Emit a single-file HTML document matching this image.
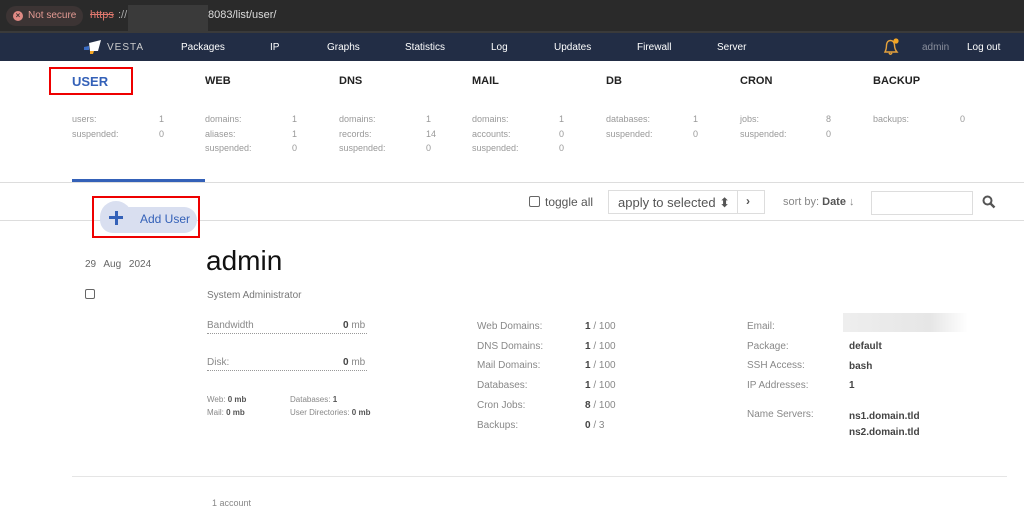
<!DOCTYPE html>
<html><head><meta charset="utf-8"><style>
*{margin:0;padding:0;box-sizing:border-box}
body{width:1024px;height:521px;overflow:hidden;background:#fff;font-family:"Liberation Sans",Arial,sans-serif;position:relative}
.a{position:absolute;white-space:nowrap}
.nav{font-size:10px;color:#fff;top:42px}
.h{font-size:11px;font-weight:bold;color:#222;top:75px}
.s{font-size:9px;color:#999}
.g{font-size:10px;color:#888}
.b{font-size:10px;color:#444;font-weight:bold}
</style></head><body>
<div class="a" style="left:0;top:0;width:1024px;height:31px;background:#2a2a2a"></div>
<div class="a" style="left:0;top:31px;width:1024px;height:2px;background:#3a3a3a"></div>
<div class="a" style="left:6px;top:6px;width:77px;height:20px;border-radius:10px;background:#3c3434"></div>
<div class="a" style="left:13px;top:11px;width:10px;height:10px;border-radius:50%;background:#e08a84;color:#3c3434;font-size:8px;line-height:10px;text-align:center;font-weight:bold">×</div>
<div class="a" style="left:28px;top:10px;font-size:10px;color:#e39a93">Not secure</div>
<div class="a" style="left:90px;top:9px;font-size:11px;color:#e0786e;text-decoration:line-through">https</div>
<div class="a" style="left:118px;top:9px;font-size:11px;color:#aaa">://</div>
<div class="a" style="left:128px;top:5px;width:80px;height:26px;background:#3a3a3a"></div>
<div class="a" style="left:208px;top:9px;font-size:11px;color:#ddd">8083/list/user/</div>
<div class="a" style="left:0;top:33px;width:1024px;height:28px;background:#222d45"></div>
<div class="a" style="left:84px;top:40px;width:18px;height:14px">
<svg width="18" height="14"><path d="M5 3 L17 0 L14 11 L6 11Z" fill="#fff"/><path d="M6 11 L10 11 L9 14 L6 14Z" fill="#f5a623"/><path d="M0 7 L5 6 L5 10 L0 10Z" fill="#3a6cc4"/></svg></div>
<div class="a nav" style="left:107px;letter-spacing:1px;color:#ccc">VESTA</div>
<div class="a nav" style="left:181px">Packages</div>
<div class="a nav" style="left:270px">IP</div>
<div class="a nav" style="left:327px">Graphs</div>
<div class="a nav" style="left:405px">Statistics</div>
<div class="a nav" style="left:491px">Log</div>
<div class="a nav" style="left:554px">Updates</div>
<div class="a nav" style="left:637px">Firewall</div>
<div class="a nav" style="left:717px">Server</div>
<svg class="a" style="left:881px;top:37px" width="20" height="20"><path d="M4 15 Q5.5 12 5.5 8 Q6 3.5 9.5 3.5 Q13 3.5 13.5 8 Q13.5 12 16 15Z M8 16 Q9.5 18.5 11 16" fill="none" stroke="#e6a23c" stroke-width="1.4"/><circle cx="15" cy="4" r="2.6" fill="#f5a623"/></svg>
<div class="a nav" style="left:922px;color:#8a8f9c">admin</div>
<div class="a nav" style="left:967px">Log out</div>
<div class="a" style="left:49px;top:67px;width:84px;height:28px;border:2px solid #e00"></div>
<div class="a" style="left:72px;top:74px;font-size:13px;font-weight:bold;color:#3461b8">USER</div>
<div class="a h" style="left:205px">WEB</div>
<div class="a h" style="left:339px">DNS</div>
<div class="a h" style="left:472px">MAIL</div>
<div class="a h" style="left:606px">DB</div>
<div class="a h" style="left:740px">CRON</div>
<div class="a h" style="left:873px">BACKUP</div>
<div class="a s" style="left:72px;top:112px;line-height:14.5px">users:<br>suspended:</div>
<div class="a s" style="left:159px;top:112px;line-height:14.5px">1<br>0</div>
<div class="a s" style="left:205px;top:112px;line-height:14.5px">domains:<br>aliases:<br>suspended:</div>
<div class="a s" style="left:292px;top:112px;line-height:14.5px">1<br>1<br>0</div>
<div class="a s" style="left:339px;top:112px;line-height:14.5px">domains:<br>records:<br>suspended:</div>
<div class="a s" style="left:426px;top:112px;line-height:14.5px">1<br>14<br>0</div>
<div class="a s" style="left:472px;top:112px;line-height:14.5px">domains:<br>accounts:<br>suspended:</div>
<div class="a s" style="left:559px;top:112px;line-height:14.5px">1<br>0<br>0</div>
<div class="a s" style="left:606px;top:112px;line-height:14.5px">databases:<br>suspended:</div>
<div class="a s" style="left:693px;top:112px;line-height:14.5px">1<br>0</div>
<div class="a s" style="left:740px;top:112px;line-height:14.5px">jobs:<br>suspended:</div>
<div class="a s" style="left:826px;top:112px;line-height:14.5px">8<br>0</div>
<div class="a s" style="left:873px;top:112px;line-height:14.5px">backups:</div>
<div class="a s" style="left:960px;top:112px;line-height:14.5px">0</div>
<div class="a" style="left:0;top:182px;width:1024px;height:1px;background:#ddd"></div>
<div class="a" style="left:72px;top:179px;width:133px;height:3px;background:#3461b8"></div>
<div class="a" style="left:0;top:220px;width:1024px;height:1px;background:#ddd"></div>
<div class="a" style="left:100px;top:207px;width:97px;height:26px;border-radius:13px;background:#d9dff0"></div>
<div class="a" style="left:100px;top:201px;width:32px;height:32px;border-radius:16px;background:#d9dff0"></div>
<div class="a" style="left:109px;top:216px;width:14px;height:3px;background:#3461b8"></div>
<div class="a" style="left:114.5px;top:210.5px;width:3px;height:14px;background:#3461b8"></div>
<div class="a" style="left:140px;top:212px;font-size:12px;color:#3461b8">Add User</div>
<div class="a" style="left:92px;top:196px;width:108px;height:42px;border:2px solid #e00"></div>
<div class="a" style="left:529px;top:196px;width:11px;height:11px;border:1px solid #666;border-radius:2px"></div>
<div class="a" style="left:545px;top:195px;font-size:12px;color:#555">toggle all</div>
<div class="a" style="left:608px;top:190px;width:157px;height:24px;border:1px solid #ddd"></div>
<div class="a" style="left:737px;top:190px;width:1px;height:24px;background:#ddd"></div>
<div class="a" style="left:618px;top:195px;font-size:13px;color:#555">apply to selected ⬍</div>
<div class="a" style="left:746px;top:194px;font-size:12px;color:#555;font-weight:bold">›</div>
<div class="a" style="left:783px;top:196px;font-size:11px;color:#888">sort by: <b style="color:#555">Date</b> ↓</div>
<div class="a" style="left:871px;top:191px;width:102px;height:24px;border:1px solid #ddd"></div>
<svg class="a" style="left:982px;top:195px" width="14" height="14"><circle cx="5.5" cy="5.5" r="4" fill="none" stroke="#555" stroke-width="2"/><path d="M8.5 8.5 L12.5 12.5" stroke="#555" stroke-width="2.4"/></svg>
<div class="a" style="left:85px;top:259px;font-size:10px;color:#666;word-spacing:5px">29 Aug 2024</div>
<div class="a" style="left:85px;top:289px;width:10px;height:10px;border:1px solid #666;border-radius:2px"></div>
<div class="a" style="left:206px;top:245px;font-size:28px;color:#111">admin</div>
<div class="a" style="left:207px;top:290px;font-size:10px;color:#777">System Administrator</div>
<div class="a g" style="left:207px;top:320px">Bandwidth</div>
<div class="a g" style="left:343px;top:320px"><b style="color:#444">0</b> mb</div>
<div class="a" style="left:207px;top:333px;width:160px;border-top:1px dotted #999"></div>
<div class="a g" style="left:207px;top:357px">Disk:</div>
<div class="a g" style="left:343px;top:357px"><b style="color:#444">0</b> mb</div>
<div class="a" style="left:207px;top:370px;width:160px;border-top:1px dotted #999"></div>
<div class="a" style="left:207px;top:393px;font-size:8px;color:#888;line-height:13px">Web: <b style="color:#555">0 mb</b><br>Mail: <b style="color:#555">0 mb</b></div>
<div class="a" style="left:290px;top:393px;font-size:8px;color:#888;line-height:13px">Databases: <b style="color:#555">1</b><br>User Directories: <b style="color:#555">0 mb</b></div>
<div class="a g" style="left:477px;top:317px;line-height:19.7px">Web Domains:<br>DNS Domains:<br>Mail Domains:<br>Databases:<br>Cron Jobs:<br>Backups:</div>
<div class="a g" style="left:585px;top:317px;line-height:19.7px"><b style="color:#444">1</b> / 100<br><b style="color:#444">1</b> / 100<br><b style="color:#444">1</b> / 100<br><b style="color:#444">1</b> / 100<br><b style="color:#444">8</b> / 100<br><b style="color:#444">0</b> / 3</div>
<div class="a g" style="left:747px;top:317px;line-height:19.7px">Email:<br>Package:<br>SSH Access:<br>IP Addresses:</div>
<div class="a" style="left:843px;top:313px;width:125px;height:19px;background:linear-gradient(90deg,#eee,#e6e6e6 70%,#fff)"></div>
<div class="a b" style="left:849px;top:337px;line-height:19.7px">default<br>bash<br>1</div>
<div class="a g" style="left:747px;top:409px">Name Servers:</div>
<div class="a b" style="left:849px;top:409px;line-height:16px">ns1.domain.tld<br>ns2.domain.tld</div>
<div class="a" style="left:72px;top:476px;width:935px;height:1px;background:#e5e5e5"></div>
<div class="a" style="left:212px;top:498px;font-size:9px;color:#888">1 account</div>
</body></html>
